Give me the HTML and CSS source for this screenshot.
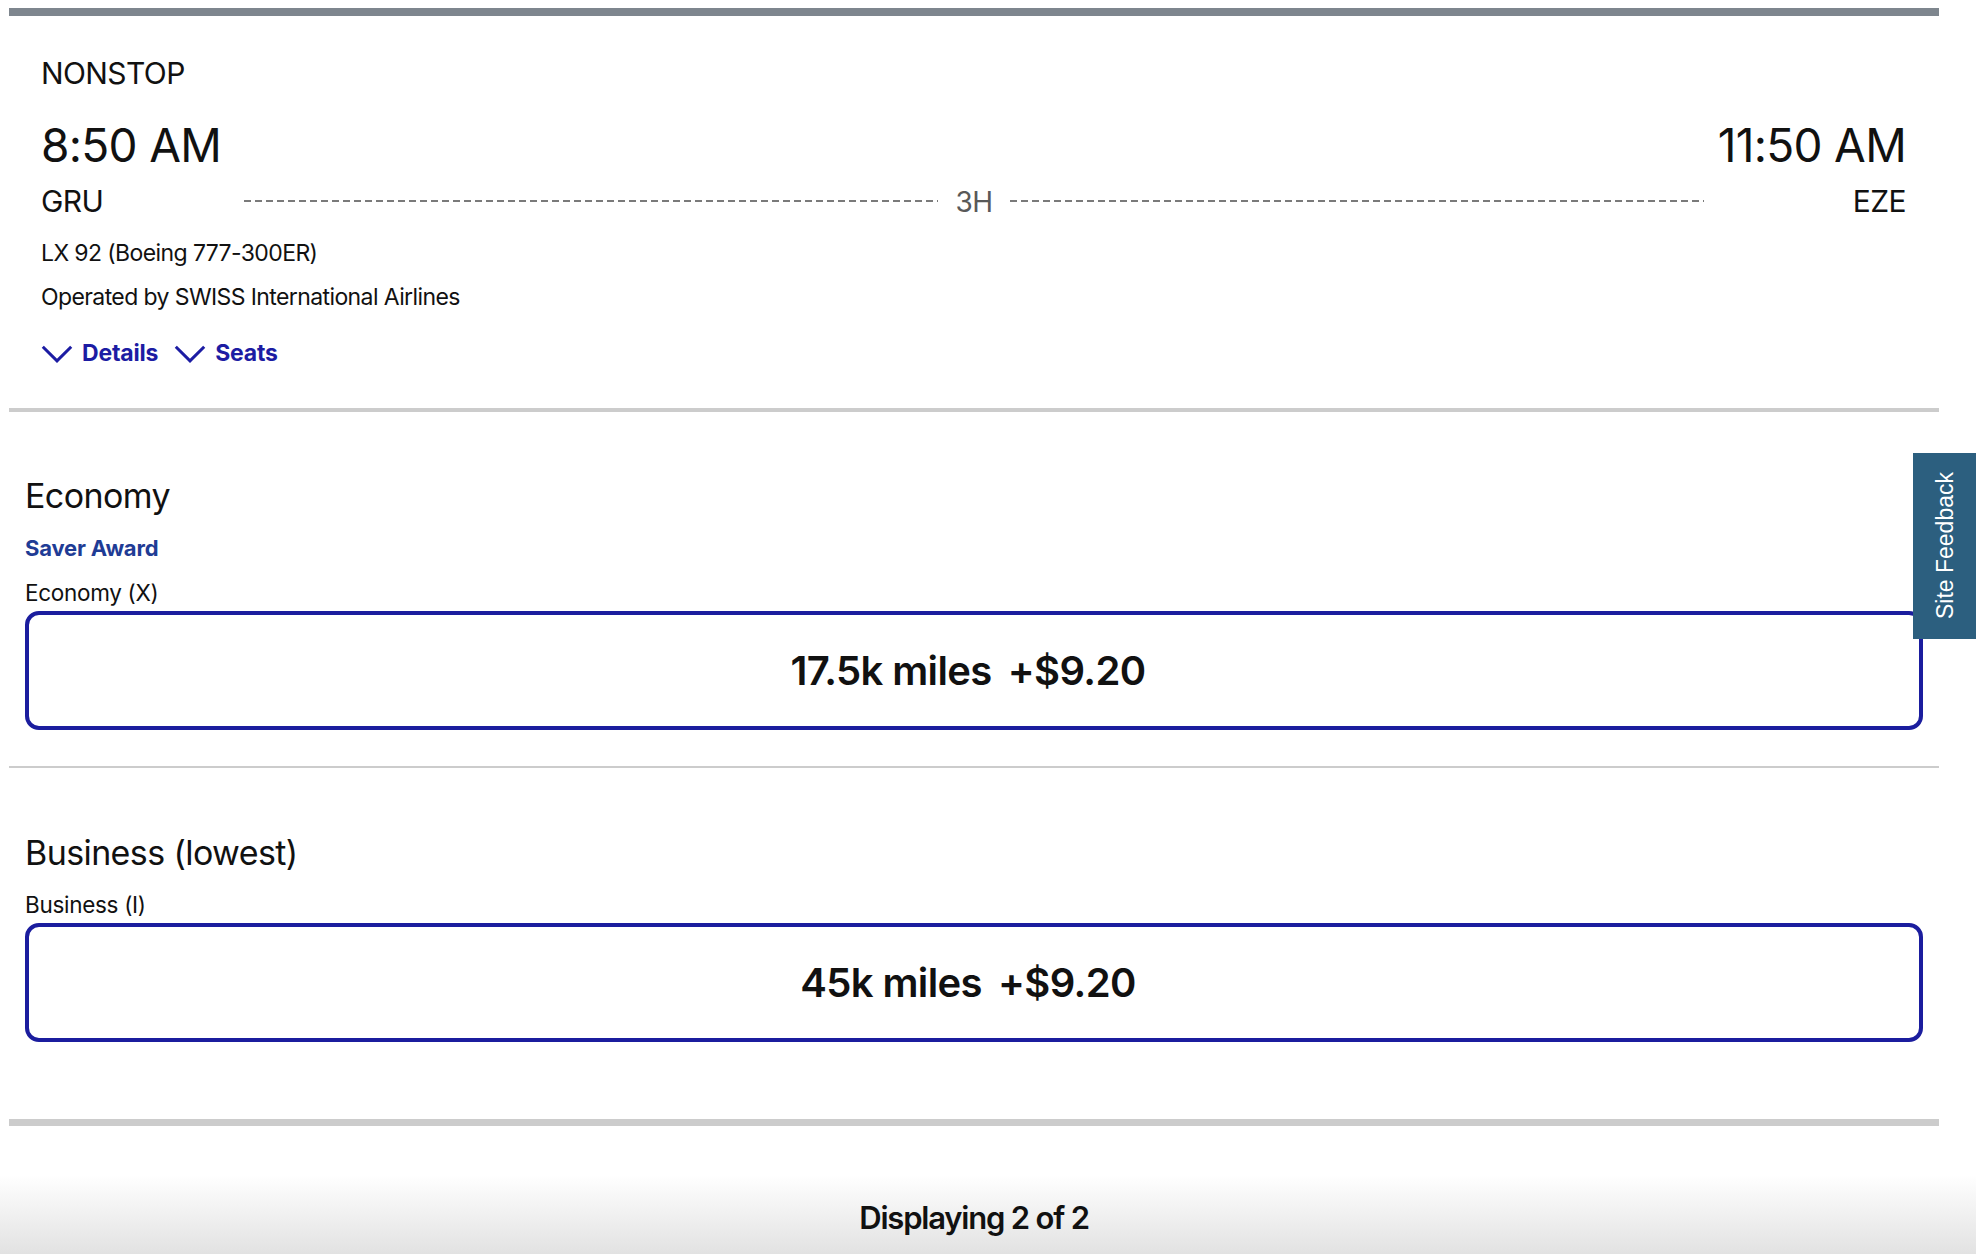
FILE: index.html
```html
<!DOCTYPE html>
<html lang="en">
<head>
<meta charset="utf-8">
<title>Flight result</title>
<link rel="stylesheet" href="styles.css">
</head>
<body>
<div class="page">
  <div class="topbar"></div>
  <section class="flight">
    <div class="stops">NONSTOP</div>
    <div class="times">
      <span class="time">8:50 AM</span>
      <span class="time">11:50 AM</span>
    </div>
    <div class="route">
      <span class="airport">GRU</span>
      <div class="duration">
        <span class="dash"></span>
        <span class="dur">3H</span>
        <span class="dash"></span>
      </div>
      <span class="airport airport-right">EZE</span>
    </div>
    <div class="meta">LX 92 (Boeing 777-300ER)</div>
    <div class="meta meta-op">Operated by SWISS International Airlines</div>
    <div class="links">
      <a class="toggle" href="#">
        <svg class="chev" width="32" height="18" viewBox="0 0 32 18"><polyline points="1.8,1.8 16,15.8 30.2,1.8" fill="none" stroke="currentColor" stroke-width="3"/></svg>
        <span>Details</span>
      </a>
      <a class="toggle" href="#">
        <svg class="chev" width="32" height="18" viewBox="0 0 32 18"><polyline points="1.8,1.8 16,15.8 30.2,1.8" fill="none" stroke="currentColor" stroke-width="3"/></svg>
        <span>Seats</span>
      </a>
    </div>
  </section>
  <div class="rule rule-4"></div>
  <section class="fare">
    <h2 class="cabin">Economy</h2>
    <div class="award">Saver Award</div>
    <div class="fare-class">Economy (X)</div>
    <button class="price-box"><span class="miles">17.5k miles</span><span class="cash">+$9.20</span></button>
  </section>
  <div class="rule rule-2"></div>
  <section class="fare fare-business">
    <h2 class="cabin">Business (lowest)</h2>
    <div class="fare-class">Business (I)</div>
    <button class="price-box"><span class="miles">45k miles</span><span class="cash">+$9.20</span></button>
  </section>
  <div class="rule rule-7"></div>
</div>
<footer class="pager">Displaying 2 of 2</footer>
<aside class="feedback"><span class="feedback-text">Site Feedback</span></aside>
</body>
</html>
```

FILE: styles.css
```css
html, body {
  margin: 0;
  padding: 0;
  background: #ffffff;
}
body {
  font-family: Inter, "Liberation Sans", Arial, sans-serif;
  color: #111111;
  overflow: hidden;
}
.page {
  margin-left: 9px;
  width: 1930px;
  padding-top: 8px;
}
.topbar {
  height: 8px;
  background: #7e868e;
}
.flight {
  padding: 39px 33px 41px 32px;
}
.stops {
  font-size: 30px;
  line-height: 36px;
  letter-spacing: -0.6px;
}
.times {
  margin-top: 27px;
  display: flex;
  justify-content: space-between;
}
.time {
  font-size: 46px;
  line-height: 54px;
  letter-spacing: -0.7px;
}
.route {
  margin-top: 11px;
  display: grid;
  grid-template-columns: 203px 1fr 202px;
  align-items: center;
}
.airport {
  font-size: 30px;
  line-height: 36px;
  letter-spacing: -0.6px;
}
.airport-right {
  text-align: right;
}
.duration {
  display: flex;
  align-items: center;
  gap: 17px;
}
.dash {
  flex: 1;
  height: 2px;
  background-image: repeating-linear-gradient(to right, #7a7a7a 0 7px, transparent 7px 11px);
}
.dur {
  font-size: 28px;
  line-height: 34px;
  padding-top: 2px;
  color: #595959;
  letter-spacing: -0.5px;
}
.meta {
  margin-top: 20px;
  font-size: 23px;
  line-height: 28px;
  letter-spacing: -0.6px;
}
.meta-op {
  margin-top: 16px;
}
.links {
  margin-top: 28px;
  display: flex;
  gap: 16px;
}
.toggle {
  display: flex;
  align-items: center;
  gap: 9px;
  color: #1c1ca3;
  text-decoration: none;
  font-size: 23px;
  line-height: 28px;
  font-weight: 700;
  letter-spacing: -0.2px;
}
.chev {
  display: block;
  margin-top: 1px;
}
.rule {
  background: #cccccc;
}
.rule-4 { height: 4px; }
.rule-2 { height: 2px; }
.rule-7 { height: 7px; }
.fare {
  padding: 64px 16px 36px 16px;
}
.fare-business {
  padding-top: 65px;
  padding-bottom: 77px;
}
.cabin {
  margin: 0;
  font-size: 34px;
  line-height: 40px;
  font-weight: 400;
  letter-spacing: -0.6px;
}
.award {
  margin-top: 19px;
  font-size: 22px;
  line-height: 26px;
  font-weight: 700;
  color: #1f3c95;
  letter-spacing: -0.2px;
}
.fare-class {
  margin-top: 19px;
  font-size: 22.5px;
  line-height: 26px;
  letter-spacing: -0.3px;
}
.price-box {
  margin-top: 5px;
  display: flex;
  justify-content: center;
  gap: 16px;
  width: 100%;
  box-sizing: border-box;
  height: 119px;
  padding: 32px 12px 31px 0;
  border: 4px solid #1b1d9e;
  border-radius: 14px;
  background: #ffffff;
  font-family: Inter, "Liberation Sans", Arial, sans-serif;
  font-size: 40px;
  line-height: 48px;
  font-weight: 600;
  color: #111111;
  letter-spacing: -0.6px;
  cursor: pointer;
}
.pager {
  height: 128px;
  box-sizing: border-box;
  padding: 74px 37px 0 9px;
  text-align: center;
  font-size: 31px;
  line-height: 36px;
  font-weight: 600;
  letter-spacing: -1.2px;
  background: linear-gradient(to bottom, #ffffff 0, #ffffff 38%, #e2e2e2 100%);
}
.feedback {
  position: fixed;
  right: 0;
  top: 453px;
  width: 63px;
  height: 186px;
  background: #2c5f7f;
  display: flex;
  align-items: center;
  justify-content: center;
}
.feedback-text {
  writing-mode: vertical-rl;
  transform: rotate(180deg);
  color: #ffffff;
  font-family: "Liberation Sans", Arial, sans-serif;
  font-size: 23px;
  line-height: 26px;
  white-space: nowrap;
}
```
